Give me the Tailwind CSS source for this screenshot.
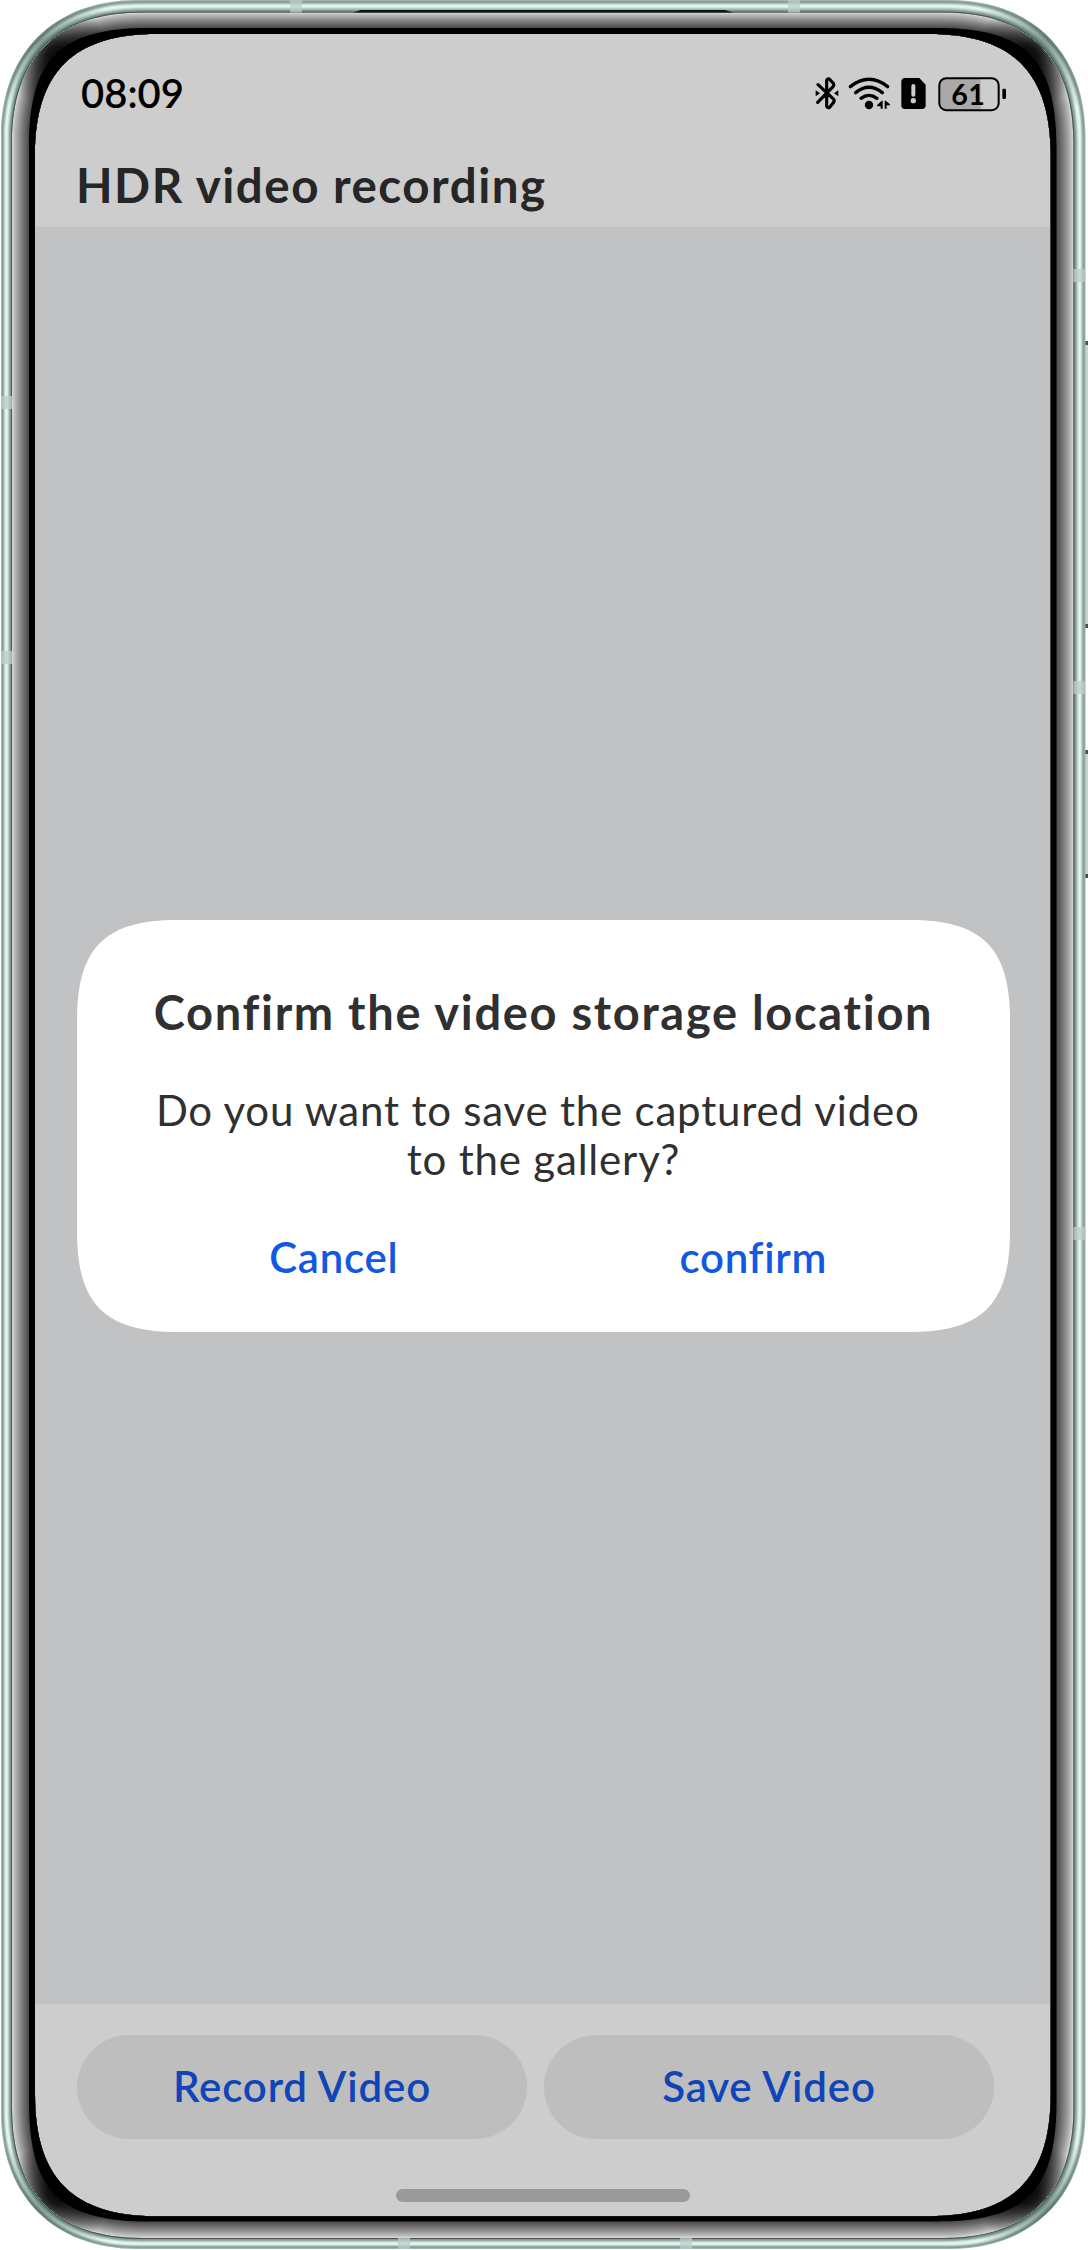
<!DOCTYPE html>
<html lang="en">
<head>
<meta charset="utf-8">
<title>HDR video recording</title>
<script src="https://cdn.jsdelivr.net/npm/@tailwindcss/browser@4"></script>
</head>
<body class="bg-white">
<div class="relative h-[2250px] w-[1088px] overflow-hidden bg-white px-[35px] py-[34px] font-['Lato',sans-serif] [font-variant-ligatures:none]">

  <!-- Screen -->
  <main class="flex h-[2182px] w-[1016px] flex-col bg-[#c1c2c4]">
    <header class="flex h-[193px] flex-col bg-[#cdcdcd]">
      <div class="flex h-[92px] items-start justify-between pl-[46px] pr-[21px] pt-[26px]">
        <span class="mt-[9px] text-[40px] leading-[48px] font-semibold text-black">08:09</span>
        <svg class="h-[70px] w-[240px]" viewBox="0 0 720 210" fill="none">
          <g stroke="#000" stroke-width="9.500" stroke-linejoin="round" stroke-linecap="round">
            <path d="M84 74L110 98L132 119Q134 123 131 127L119 142Q113 145 110 139V61Q112 55 118 57L130 70Q133 75 130 79L83 127"/>
          </g>
          <path d="M77 91L90 100L77 109ZM145 91L132 100L145 109Z" fill="#000"/>
          <g stroke="#000" stroke-width="10" stroke-linecap="round">
            <path d="M181 80Q237 36 293 80"/>
            <path d="M197 98Q237 66 277 98"/>
            <path d="M213 115Q237 97 261 115"/>
          </g>
          <circle cx="237" cy="135" r="12.500" fill="#000"/>
          <path d="M261 136L275 122H278V146H272V139H261ZM284 122H287L300 133V136H290V146H284Z" fill="#000"/>
          <path d="M345 54H388L407 74V136Q407 147 396 147H345Q334 147 334 136V65Q334 54 345 54Z" fill="#000"/>
          <path d="M370 78V104" stroke="#cdcdcd" stroke-width="12" stroke-linecap="round"/>
          <circle cx="370" cy="122" r="8" fill="#cdcdcd"/>
          <path d="M470 56H572V149H470Q451 149 451 130V75Q451 56 470 56Z" fill="#a9a9a9"/>
          <rect x="448" y="54.500" width="178" height="96" rx="21" stroke="#000" stroke-width="6"/>
          <rect x="637" y="86" width="11" height="31" rx="4" fill="#000"/>
          <text x="535" y="134" text-anchor="middle" class="fill-black text-[86px] font-bold tracking-[1px]">61</text>
        </svg>
      </div>
      <h1 class="ml-[41px] mt-[30px] text-[47.500px] leading-[58px] font-bold tracking-[1.500px] text-[#262626]">HDR video recording</h1>
    </header>

    <section class="flex flex-1 flex-col px-[42px] pt-[693px]">
      <div class="relative flex h-[412px] w-[933px] flex-col pt-[64px] text-center" role="dialog">
        <svg class="absolute inset-0 h-[412px] w-[933px]" viewBox="0 0 933 412"><path fill="#fff" d="M0 100C0 28 28 0 100 0H833C905 0 933 28 933 100V312C933 384 905 412 833 412H100C28 412 0 384 0 312Z"/></svg>
        <h2 class="relative text-[47px] leading-[56px] font-bold tracking-[1.700px] text-[#303030]">Confirm the video storage location</h2>
        <p class="relative mt-[46px] text-[42px] leading-[49px] tracking-[0.800px] text-[#303030]">Do you want to save the captured video&nbsp;<br>to the gallery?</p>
        <div class="relative mt-[48px] grid grid-cols-2 px-[47px] text-[42px] leading-[50px] font-semibold tracking-[0.700px] text-[#1258e2]">
          <button>Cancel</button>
          <button>confirm</button>
        </div>
      </div>
    </section>

    <footer class="flex h-[212px] flex-col items-center bg-[#cdcdcd] pt-[31px]">
      <div class="flex w-[1016px] gap-[17px] pl-[42px] text-[42px] font-semibold tracking-[0.850px] text-[#0f45b8]">
        <button class="h-[104px] w-[450px] rounded-full bg-[#bebebe] pb-[2px]">Record Video</button>
        <button class="h-[104px] w-[450px] rounded-full bg-[#bebebe] pb-[2px]">Save Video</button>
      </div>
      <div class="mt-[50px] h-[13px] w-[294px] rounded-full bg-[#9a9a9a]"></div>
    </footer>
  </main>

  <!-- Phone body -->
  <svg id="frame" class="pointer-events-none absolute inset-0 h-[2250px] w-[1088px]" viewBox="0 0 1088 2250"></svg>
</div>
<script>
  // Edges are [left, top, right, bottom, corner length, corner depth on the diagonal]
  const OUTER = [1, 0, 1085.5, 2249, 136, 37];
  const BEZEL = [12, 12.5, 1073.5, 2238, 130, 33];
  const BLACK = [29, 28, 1056.5, 2221.5, 120, 26.5];
  const SCREEN = [35, 34, 1050.7, 2216.3, 122, 29.5];
  const mix = (a, b, t) => a.map((v, i) => v + (b[i] - v) * t);
  const shape = ([l, t, r, b, e, m]) => {
    const k = (8 * m - e) / 3;
    return `M${l} ${t + e}C${l} ${t + k} ${l + k} ${t} ${l + e} ${t}H${r - e}C${r - k} ${t} ${r} ${t + k} ${r} ${t + e}V${b - e}C${r} ${b - k} ${r - k} ${b} ${r - e} ${b}H${l + e}C${l + k} ${b} ${l} ${b - k} ${l} ${b - e}Z`;
  };
  const ring = (a, b, fill) => `<path fill-rule="evenodd" fill="${fill}" d="${shape(a)}${shape(b)}"/>`;
  let s = `<defs><clipPath id="metal"><path clip-rule="evenodd" d="${shape(OUTER)}${shape(BEZEL)}"/></clipPath>
    <clipPath id="bez"><path clip-rule="evenodd" d="${shape(BEZEL)}${shape(SCREEN)}"/></clipPath>
    <radialGradient id="dark"><stop offset="0.15" stop-color="#000" stop-opacity=".85"/><stop offset="1" stop-color="#000" stop-opacity="0"/></radialGradient>
    <radialGradient id="shade"><stop offset="0" stop-color="#3f5f57" stop-opacity=".6"/><stop offset="1" stop-color="#3f5f57" stop-opacity="0"/></radialGradient></defs>`;
  // White page around the body
  s += `<path fill="#fff" fill-rule="evenodd" d="M0 0H1088V2250H0Z${shape(BEZEL)}"/>`;
  // Buttons on the right side
  for (const [y, h] of [[341, 287], [750, 128]]) {
    s += `<rect x="1084" y="${y}" width="4" height="${h}" fill="#c3d5d0"/><rect x="1085" y="${y}" width="3" height="4" fill="#42504c"/><rect x="1085" y="${y + h - 4}" width="3" height="4" fill="#42504c"/>`;
  }
  const greys = 17;
  for (let i = 0; i < greys; i++) {
    const t = i / greys, c = Math.round(212 - 142 * Math.pow(t, 0.85));
    s += ring(mix(BEZEL, BLACK, t), SCREEN, `rgb(${c},${c},${c})`);
  }
  s += ring(BLACK, SCREEN, '#000');
  const corners = [[56, 55], [1029.5, 55], [56, 2195], [1029.5, 2195]];
  s += `<g clip-path="url(#bez)">${corners.map(([x, y]) => `<circle cx="${x}" cy="${y}" r="54" fill="url(#dark)"/>`).join('')}</g>`;
  const metal = ['#a3b5b0', '#879d97', '#8fa6a0', '#b4c9c4', '#d3e7e2', '#e6f7f3', '#e2f3ef', '#cfe2dd', '#b0c6c0', '#8da39d', '#7f9690', '#4a5451'];
  metal.forEach((c, i) => { s += ring(mix(OUTER, BEZEL, i / metal.length), BEZEL, c); });
  s += `<g clip-path="url(#metal)">${[[38, 38], [1048, 38], [38, 2211], [1048, 2211]].map(([x, y]) => `<circle cx="${x}" cy="${y}" r="75" fill="url(#shade)"/>`).join('')}</g>`;
  // Antenna bands
  s += '<g fill="#bccec9" fill-opacity=".75">';
  for (const x of [290, 788]) s += `<rect x="${x}" y="0" width="12" height="12.500"/>`;
  for (const x of [398, 680]) s += `<rect x="${x}" y="2238" width="12" height="11"/>`;
  for (const y of [396, 651]) s += `<rect x="1" y="${y}" width="11" height="13"/>`;
  for (const y of [269, 681, 1227]) s += `<rect x="1073.500" y="${y}" width="12" height="13"/>`;
  s += '</g><path d="M353 12.500L361 10H725L733 12.500Z" fill="#0d1513"/>';
  document.getElementById('frame').innerHTML = s;
</script>
</body>
</html>
